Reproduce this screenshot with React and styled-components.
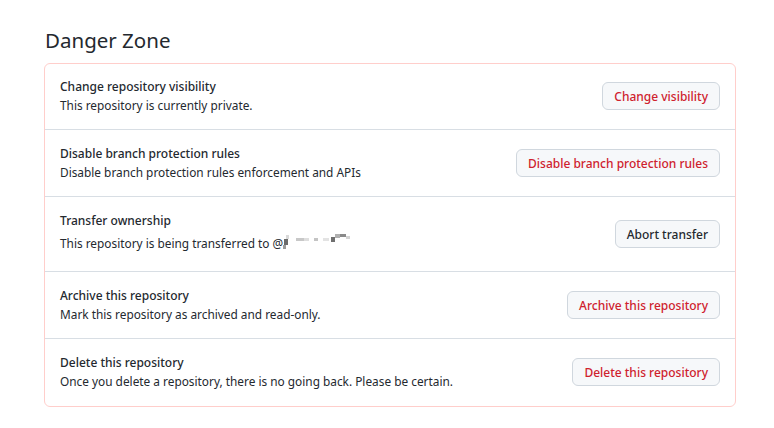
import styled, { createGlobalStyle } from 'styled-components';

const GlobalStyle = createGlobalStyle`
  body {
    margin: 0;
    background: #ffffff;
    font-family: 'Noto Sans', 'Open Sans', sans-serif;
    color: #24292f;
  }
`;

const rows = [
  {
    title: 'Change repository visibility',
    desc: 'This repository is currently private.',
    action: 'Change visibility',
    danger: true,
  },
  {
    title: 'Disable branch protection rules',
    desc: 'Disable branch protection rules enforcement and APIs',
    action: 'Disable branch protection rules',
    danger: true,
  },
  {
    title: 'Transfer ownership',
    desc: 'This repository is being transferred to @',
    action: 'Abort transfer',
    danger: false,
    user: true,
  },
  {
    title: 'Archive this repository',
    desc: 'Mark this repository as archived and read-only.',
    action: 'Archive this repository',
    danger: true,
  },
  {
    title: 'Delete this repository',
    desc: 'Once you delete a repository, there is no going back. Please be certain.',
    action: 'Delete this repository',
    danger: true,
  },
];

function HiddenUser() {
  return (
    <UserMask width="70" height="20" viewBox="0 0 70 20">
      <rect x="3" y="3" width="3" height="4" fill="#d9d9d9" />
      <rect x="1" y="7" width="4" height="6" fill="#6b6b6b" />
      <rect x="0" y="13" width="3" height="4" fill="#9a9a9a" />
      <rect x="13" y="6" width="8" height="3" fill="#c8c8c8" />
      <rect x="21" y="6" width="5" height="3" fill="#dedede" />
      <rect x="31" y="6" width="4" height="3" fill="#c4c4c4" />
      <rect x="40" y="6" width="6" height="3" fill="#e3e3e3" />
      <rect x="48" y="5" width="4" height="5" fill="#6f6f6f" />
      <rect x="52" y="2" width="5" height="4" fill="#b0b0b0" />
      <rect x="57" y="2" width="6" height="3" fill="#8a8a8a" />
      <rect x="63" y="4" width="4" height="3" fill="#d4d4d4" />
    </UserMask>
  );
}

export default function App() {
  return (
    <>
      <GlobalStyle />
      <Page>
        <Heading>Danger Zone</Heading>
        <Box>
          {rows.map((r) => (
            <Row key={r.title}>
              <Info>
                <Title>{r.title}</Title>
                <Desc $tall={r.user}>
                  {r.desc}
                  {r.user && <HiddenUser />}
                </Desc>
              </Info>
              <Button $danger={r.danger}>{r.action}</Button>
            </Row>
          ))}
        </Box>
      </Page>
    </>
  );
}

const Page = styled.div`
  padding: 22px 0 0 44px;
  width: 692px;
`;

const Heading = styled.h2`
  margin: 0 0 5px 1px;
  font-size: 20.5px;
  line-height: 36px;
  font-weight: 400;
  color: #24292f;
`;

const Box = styled.div`
  border: 1px solid #ffcecb;
  border-radius: 6px;
`;

const Row = styled.div`
  display: flex;
  align-items: center;
  justify-content: space-between;
  padding: 15px;
  border-top: 1px solid #d8dee4;

  &:first-child {
    border-top: none;
    padding-top: 14px;
  }

  &:last-child {
    padding-bottom: 16px;
  }
`;

const Info = styled.div`
  display: flex;
  flex-direction: column;
`;

const Title = styled.div`
  font-size: 12px;
  line-height: 18px;
  font-weight: 500;
  color: #24292f;
`;

const Desc = styled.div`
  font-size: 11.85px;
  line-height: ${(p) => (p.$tall ? '26px' : '18px')};
  color: #24292f;
  display: flex;
  align-items: flex-end;
`;

const UserMask = styled.svg`
  display: block;
  margin-bottom: 4px;
`;

const Button = styled.button`
  height: 28px;
  padding: 0 11px;
  border: 1px solid #d0d7de;
  border-radius: 6px;
  background: #f6f8fa;
  color: ${(p) => (p.$danger ? '#cf222e' : '#24292f')};
  font-family: 'Noto Sans', 'Open Sans', sans-serif;
  font-size: 12px;
  font-weight: 500;
  white-space: nowrap;
  cursor: pointer;
`;
